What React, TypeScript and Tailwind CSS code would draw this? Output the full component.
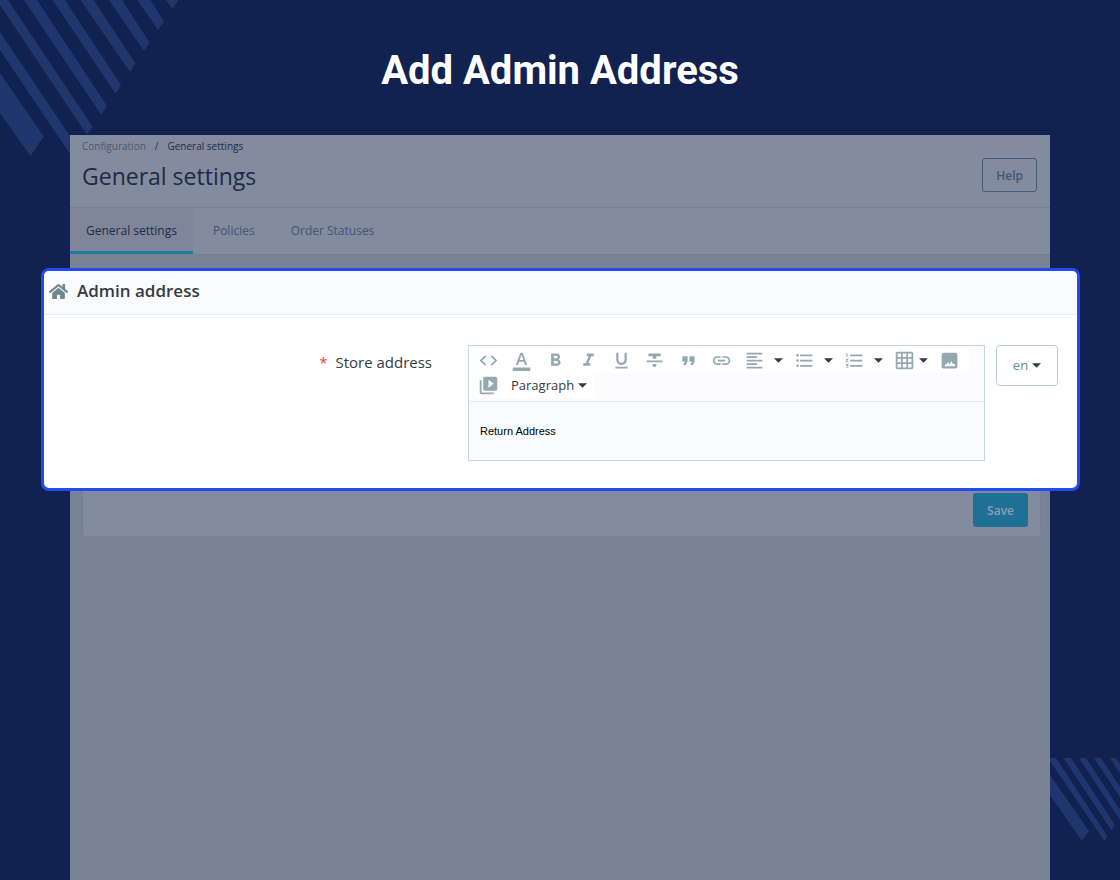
import type { ReactNode } from "react";
import { FaHome } from "react-icons/fa";
import {
  MdCode,
  MdFormatAlignLeft,
  MdFormatBold,
  MdFormatColorText,
  MdFormatItalic,
  MdFormatListBulleted,
  MdFormatListNumbered,
  MdFormatQuote,
  MdFormatStrikethrough,
  MdFormatUnderlined,
  MdGridOn,
  MdLink,
  MdVideoLibrary,
} from "react-icons/md";

function Caret() {
  return (
    <svg viewBox="0 0 10 5" className="h-[5px] w-[9px] shrink-0 fill-[#363a41]" aria-hidden="true">
      <path d="M0 0h10L5 5z" />
    </svg>
  );
}

function PhotoIcon() {
  return (
    <svg viewBox="0 0 24 24" className="size-[21px] fill-current" fillRule="evenodd" aria-hidden="true">
      <path d="M5 3h14a2 2 0 0 1 2 2v14a2 2 0 0 1-2 2H5a2 2 0 0 1-2-2V5a2 2 0 0 1 2-2zM6 18.7H19L17 15.5L16 16.3L14.3 12.7L12.2 16.3L10.3 13.8L8.5 16.5L7.8 16z" />
    </svg>
  );
}

function Tool({ label, children }: { label: string; children: ReactNode }) {
  return (
    <button type="button" aria-label={label} className="flex h-[25px] shrink-0 items-center">
      {children}
    </button>
  );
}

function MenuTool({ label, tight = false, children }: { label: string; tight?: boolean; children: ReactNode }) {
  return (
    <button
      type="button"
      aria-label={label}
      className={
        tight
          ? "flex h-[25px] shrink-0 items-center gap-1 pl-1.5"
          : "flex h-[25px] w-[50px] shrink-0 items-center gap-[9px] pl-1.5"
      }
    >
      {children}
      <Caret />
    </button>
  );
}

function TopStripes() {
  return (
    <svg width="180" height="160" viewBox="0 0 180 160" className="absolute top-0 left-0 fill-[#20366f]" aria-hidden="true">
      <path d="M0 73L43.7 136.5L30.5 156L0 113z" />
      <path d="M0 32L78 148L72 157L0 50z" />
      <path d="M0 0H8L92.5 126.5L87 135L0 5z" />
      <path d="M24 0H37L107 106L101 114.5z" />
      <path d="M52.5 0H65L121 85L115.5 93.5z" />
      <path d="M80.5 0H93.5L135.3 63L130 72z" />
      <path d="M109 0H122L149.5 42.5L144 51z" />
      <path d="M137.5 0H150.5L164 21.5L158 30z" />
      <path d="M166 0H178.5L172.5 9z" />
    </svg>
  );
}

function BottomStripes() {
  return (
    <svg width="70" height="84" viewBox="0 0 70 84" className="absolute right-0 bottom-[38px] fill-[#20366f]" aria-hidden="true">
      <path d="M0 17L39 73L32 83L0 37z" />
      <path d="M0 0H6L57.5 78.5L54.5 83L0 3z" />
      <path d="M13.5 0H21L65 67L61.5 72.5z" />
      <path d="M29 0H36L70 52V62z" />
      <path d="M44 0H51L70 29V39z" />
      <path d="M60 0H66L70 6V15z" />
    </svg>
  );
}

export default function App() {
  return (
    <main className="relative flex min-h-screen flex-col bg-[#112150] px-[70px] font-['Open_Sans',sans-serif]">
      <TopStripes />
      <BottomStripes />
      <h1 className="relative pt-[47px] pb-10 text-center font-['Roboto',sans-serif] text-[40px] leading-[48px] font-bold text-white">
        Add Admin Address
      </h1>

      <div className="relative flex flex-1 flex-col bg-[#7a8296]">
        <header className="border-b border-[#768094] bg-[#838b9f]">
          <div className="flex items-center justify-between pr-[13px] pl-3">
            <div className="h-[72px] pt-1">
              <nav aria-label="Breadcrumb" className="flex text-[10px] leading-[14px]">
                <a href="#configuration" className="text-[#4a5870]">Configuration</a>
                <span className="px-[9px] text-[#27334c]">/</span>
                <a href="#general" className="text-[#1c2a47]">General settings</a>
              </nav>
              <h2 className="pt-[7px] text-[23px] leading-8 text-[#1e2a44]">General settings</h2>
            </div>
            <button
              type="button"
              className="mt-2 h-[34px] rounded-[3px] border border-[#465c76] px-[13px] pt-px text-[12px] font-semibold text-[#415670]"
            >
              Help
            </button>
          </div>
        </header>
        <nav aria-label="Settings" className="flex h-[47px] border-b border-[#768094] bg-[#838b9f] text-[12px] text-[#415670]">
          <a href="#general" className="border-b-[3px] border-[#1f7da0] bg-[#7f869a] px-4 pt-3.5 leading-[18px] text-[#1c2a47]">
            General settings
          </a>
          <a href="#policies" className="px-5 pt-3.5 leading-[18px]">Policies</a>
          <a href="#statuses" className="px-4 pt-3.5 leading-[18px]">Order Statuses</a>
        </nav>

        <form className="pt-[13px]">
          <section className="-mr-[30px] -ml-[29px] overflow-hidden rounded-lg border-[3px] border-[#2149f5] bg-white">
            <h3 className="flex h-11 items-center gap-[9px] border-b border-[#e4ecef] bg-[#fafbfd] pb-[3px] pl-[5px] text-[17px] font-semibold text-[#363a41]">
              <FaHome className="size-[19px] text-[#6c868e]" aria-hidden="true" />
              Admin address
            </h3>
            <div className="flex items-start px-[19px] pt-[30px] pb-[27px]">
              <label htmlFor="store-address" className="flex-1 pt-[7px] pr-9 text-right text-[15px] leading-[20px] text-[#363a41]">
                <span className="pr-1 text-[#f44336]">*</span> Store address
              </label>
              <div className="w-[517px] border border-[#c7d6db] bg-[#fafbfc]">
                <div className="border-b border-[#e4ecef] bg-[#fcfcfe] text-[21px] text-[#95a7af]">
                  <div className="flex w-[500px] bg-white pt-0.5 pl-[9px]">
                    <div className="mr-1.5 flex w-[254px] justify-between">
                      <Tool label="Source code"><MdCode /></Tool>
                      <Tool label="Text color"><MdFormatColorText /></Tool>
                      <Tool label="Bold"><MdFormatBold /></Tool>
                      <Tool label="Italic"><MdFormatItalic /></Tool>
                      <Tool label="Underline"><MdFormatUnderlined /></Tool>
                      <Tool label="Strikethrough"><MdFormatStrikethrough /></Tool>
                      <Tool label="Blockquote"><MdFormatQuote /></Tool>
                      <Tool label="Insert link"><MdLink /></Tool>
                    </div>
                    <MenuTool label="Alignment"><MdFormatAlignLeft /></MenuTool>
                    <MenuTool label="Bullet list"><MdFormatListBulleted /></MenuTool>
                    <MenuTool label="Numbered list"><MdFormatListNumbered /></MenuTool>
                    <div className="flex gap-[11px]">
                      <MenuTool label="Table" tight><MdGridOn /></MenuTool>
                      <Tool label="Insert image"><PhotoIcon /></Tool>
                    </div>
                  </div>
                  <div className="mb-[3px] flex w-[126px] gap-3 bg-white pl-[9px]">
                    <Tool label="Insert video"><MdVideoLibrary /></Tool>
                    <button type="button" className="flex h-[25px] items-center gap-1 text-[13px] text-[#363a41]">
                      Paragraph
                      <Caret />
                    </button>
                  </div>
                </div>
                <textarea
                  id="store-address"
                  rows={1}
                  defaultValue="Return Address"
                  className="block h-[58px] w-full resize-none px-[11px] pt-[21px] font-['Liberation_Sans',sans-serif] text-[11px] leading-4 text-black outline-none"
                />
              </div>
              <button
                type="button"
                className="ml-[11px] flex h-[41px] w-[62px] items-center justify-center gap-1 rounded-[4px] border border-[#bbcdd2] text-[13px] font-medium text-[#6c868e]"
              >
                en
                <Caret />
              </button>
            </div>
          </section>
          <div className="mr-[9px] ml-3 flex h-[46px] justify-end rounded-b-[4px] border border-t-0 border-[#768094] bg-[#838b9f] pt-0.5 pr-3">
            <button type="submit" className="h-[34px] rounded-[3px] bg-[#1f7095] px-3.5 pt-px text-[12px] font-semibold text-[#8f9db1]">
              Save
            </button>
          </div>
        </form>
      </div>
    </main>
  );
}
